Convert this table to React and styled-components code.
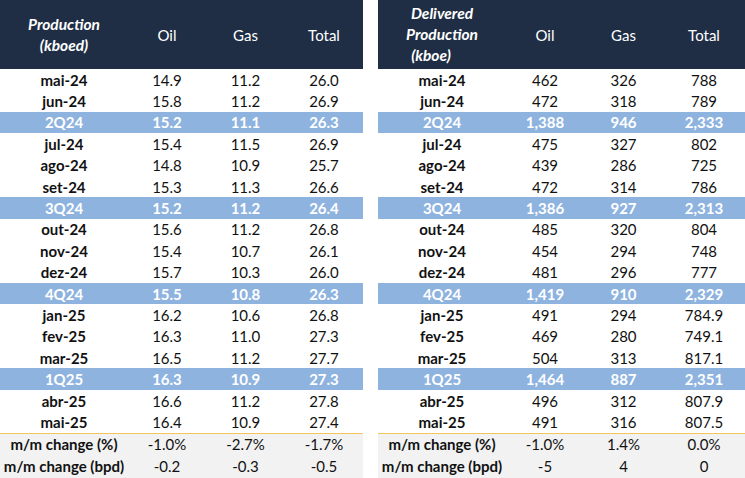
import React from "react";
import styled, { createGlobalStyle } from "styled-components";

const Global = createGlobalStyle`
  html, body { margin: 0; padding: 0; background: #ffffff; }
  body { font-family: Lato, "Open Sans", sans-serif; }
`;

const Page = styled.div`
  display: flex;
  gap: 15px;
  width: 745px;
  height: 478px;
  overflow: hidden;
  font-family: Lato, "Open Sans", sans-serif;
  font-size: 15px;
  color: #111;
`;

const Table = styled.div`
  display: flex;
  flex-direction: column;
  width: ${(p) => p.$width}px;
`;

const Row = styled.div`
  display: grid;
  grid-template-columns: ${(p) => p.$cols};
  align-items: center;
  height: ${(p) => (p.$kind === "change" ? "22.5px" : "21.4px")};
  background: ${(p) =>
    p.$kind === "band" ? "#8EB3DF" : p.$kind === "change" ? "#F2F2F2" : "#ffffff"};
  color: ${(p) => (p.$kind === "band" ? "#ffffff" : "#111111")};
  font-weight: ${(p) => (p.$kind === "band" ? 700 : 400)};
  border-top: ${(p) => (p.$first ? "1px solid #F4C55C" : "none")};
  box-sizing: border-box;
`;

const Head = styled.div`
  display: grid;
  grid-template-columns: ${(p) => p.$cols};
  align-items: center;
  height: 69px;
  background: #1F2E45;
  color: #ffffff;
`;

const HeadTitle = styled.div`
  display: flex;
  flex-direction: column;
  align-items: center;
  font-weight: 700;
  font-style: italic;
  font-size: 15.5px;
  line-height: 21px;
`;

const TitleLine = styled.span`
  padding-right: ${(p) => p.$shift || 0}px;
`;

const HeadCell = styled.div`
  text-align: center;
`;

const Label = styled.div`
  text-align: center;
  font-weight: 700;
  white-space: nowrap;
`;

const Cell = styled.div`
  text-align: center;
`;

const leftCols = "128px 78px 79px 78px";
const rightCols = "128px 78px 79px 82px";

const leftData = [
  ["mai-24", "14.9", "11.2", "26.0"],
  ["jun-24", "15.8", "11.2", "26.9"],
  ["2Q24", "15.2", "11.1", "26.3", "band"],
  ["jul-24", "15.4", "11.5", "26.9"],
  ["ago-24", "14.8", "10.9", "25.7"],
  ["set-24", "15.3", "11.3", "26.6"],
  ["3Q24", "15.2", "11.2", "26.4", "band"],
  ["out-24", "15.6", "11.2", "26.8"],
  ["nov-24", "15.4", "10.7", "26.1"],
  ["dez-24", "15.7", "10.3", "26.0"],
  ["4Q24", "15.5", "10.8", "26.3", "band"],
  ["jan-25", "16.2", "10.6", "26.8"],
  ["fev-25", "16.3", "11.0", "27.3"],
  ["mar-25", "16.5", "11.2", "27.7"],
  ["1Q25", "16.3", "10.9", "27.3", "band"],
  ["abr-25", "16.6", "11.2", "27.8"],
  ["mai-25", "16.4", "10.9", "27.4"],
];

const leftChange = [
  ["m/m change (%)", "-1.0%", "-2.7%", "-1.7%"],
  ["m/m change (bpd)", "-0.2", "-0.3", "-0.5"],
];

const rightData = [
  ["mai-24", "462", "326", "788"],
  ["jun-24", "472", "318", "789"],
  ["2Q24", "1,388", "946", "2,333", "band"],
  ["jul-24", "475", "327", "802"],
  ["ago-24", "439", "286", "725"],
  ["set-24", "472", "314", "786"],
  ["3Q24", "1,386", "927", "2,313", "band"],
  ["out-24", "485", "320", "804"],
  ["nov-24", "454", "294", "748"],
  ["dez-24", "481", "296", "777"],
  ["4Q24", "1,419", "910", "2,329", "band"],
  ["jan-25", "491", "294", "784.9"],
  ["fev-25", "469", "280", "749.1"],
  ["mar-25", "504", "313", "817.1"],
  ["1Q25", "1,464", "887", "2,351", "band"],
  ["abr-25", "496", "312", "807.9"],
  ["mai-25", "491", "316", "807.5"],
];

const rightChange = [
  ["m/m change (%)", "-1.0%", "1.4%", "0.0%"],
  ["m/m change (bpd)", "-5", "4", "0"],
];

function DataTable({ width, cols, title, data, change }) {
  return (
    <Table $width={width}>
      <Head $cols={cols}>
        <HeadTitle>{title}</HeadTitle>
        <HeadCell>Oil</HeadCell>
        <HeadCell>Gas</HeadCell>
        <HeadCell>Total</HeadCell>
      </Head>
      {data.map(([l, a, b, c, kind]) => (
        <Row key={l} $cols={cols} $kind={kind}>
          <Label>{l}</Label>
          <Cell>{a}</Cell>
          <Cell>{b}</Cell>
          <Cell>{c}</Cell>
        </Row>
      ))}
      {change.map(([l, a, b, c], i) => (
        <Row key={l} $cols={cols} $kind="change" $first={i === 0}>
          <Label>{l}</Label>
          <Cell>{a}</Cell>
          <Cell>{b}</Cell>
          <Cell>{c}</Cell>
        </Row>
      ))}
    </Table>
  );
}

export default function App() {
  return (
    <>
      <Global />
      <Page>
        <DataTable
          width={363}
          cols={leftCols}
          data={leftData}
          change={leftChange}
          title={
            <>
              <TitleLine>Production</TitleLine>
              <TitleLine>(kboed)</TitleLine>
            </>
          }
        />
        <DataTable
          width={367}
          cols={rightCols}
          data={rightData}
          change={rightChange}
          title={
            <>
              <TitleLine>Delivered</TitleLine>
              <TitleLine>Production</TitleLine>
              <TitleLine $shift={22}>(kboe)</TitleLine>
            </>
          }
        />
      </Page>
    </>
  );
}
